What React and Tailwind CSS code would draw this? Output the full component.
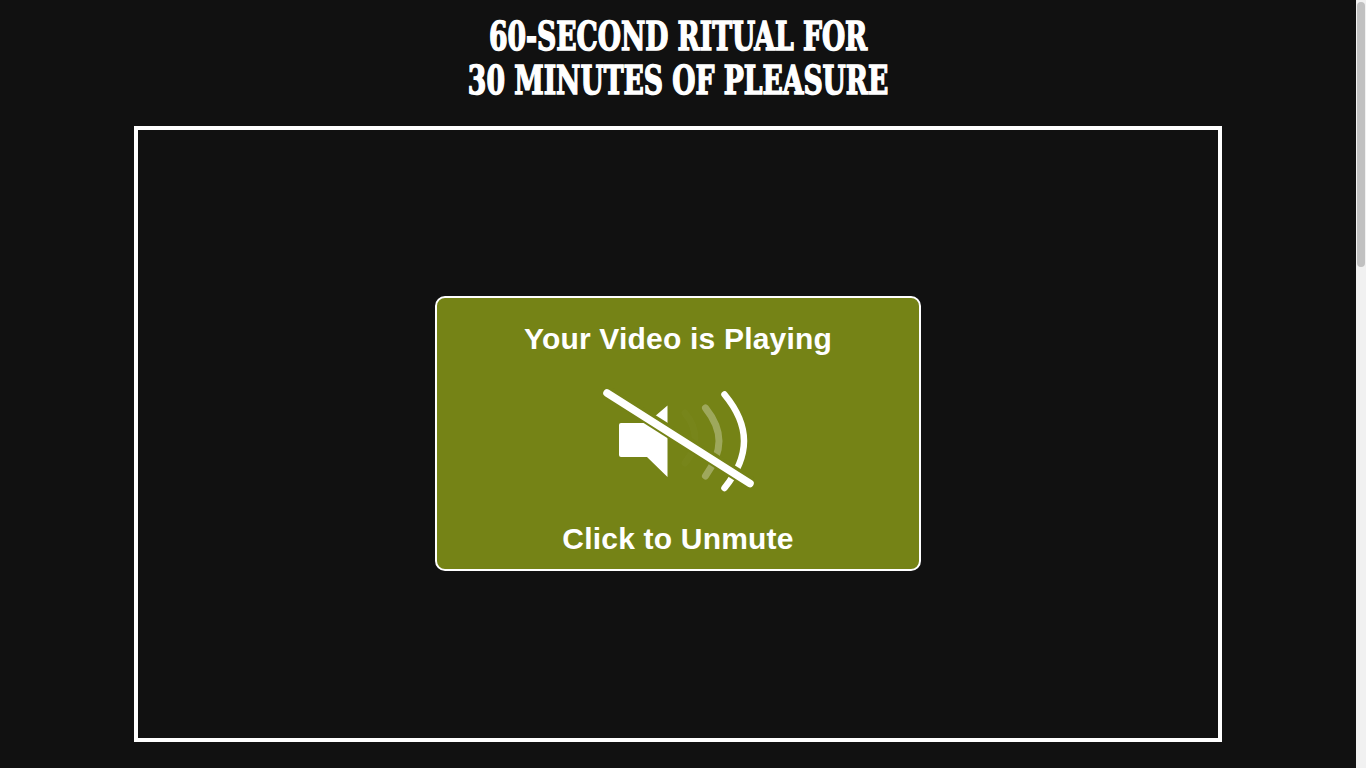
function MutedSpeaker() {
  return (
    <svg width="180" height="125" viewBox="588 375 180 125" fill="none" className="block">
      <path d="M621 423H647L667.5 405.5V477L647 457H621Q619 457 619 455V425Q619 423 621 423Z" fill="#fff" />
      <path d="M685 413Q695 425 695 438T685 463" stroke="#fff" strokeOpacity="0.02" strokeWidth="7" strokeLinecap="round" />
      <path d="M705.5 408Q719 425 719 441T705.5 476" stroke="#fff" strokeOpacity="0.3" strokeWidth="7" strokeLinecap="round" />
      <path d="M724.5 394.5Q744 418 744 441T724.5 488" stroke="#fff" strokeWidth="6.5" strokeLinecap="round" />
      <path d="M606 391.5L750.5 483" stroke="#758316" strokeWidth="13" />
      <path d="M607 393L750 483.5" stroke="#fff" strokeWidth="7.5" strokeLinecap="round" />
    </svg>
  );
}

export default function App() {
  return (
    <div className="h-screen overflow-hidden flex bg-[#111111]">
      <div className="flex-1 flex flex-col items-center pt-[14px]">
        <h1 className="m-0 text-center text-white whitespace-nowrap text-[40px] leading-[44px] font-bold font-['DejaVu_Serif_Condensed','DejaVu_Serif',serif] scale-x-[0.74] [-webkit-text-stroke:1.5px_white] [font-feature-settings:'zero']">
          60-SECOND RITUAL FOR
          <br />
          30 MINUTES OF PLEASURE
        </h1>
        <div className="mt-[24px] w-[1088px] h-[616px] border-4 border-white flex items-start justify-center pt-[166px]">
          <div className="w-[486px] h-[275px] border-2 border-white rounded-[10px] bg-[#758316] flex flex-col items-center text-white font-bold text-[30px] tracking-[0.2px] leading-[36px] font-['Liberation_Sans',Arial,sans-serif] pt-[23px]">
            <div>Your Video is Playing</div>
            <div className="mt-[18px]"><MutedSpeaker /></div>
            <div className="mt-[21px]">Click to Unmute</div>
          </div>
        </div>
      </div>
      <div className="w-[10px] shrink-0 bg-[#f1f1f1] px-[1px] pt-[2px]">
        <div className="h-[265px] rounded-[4px] bg-[#c1c1c1]" />
      </div>
    </div>
  );
}
